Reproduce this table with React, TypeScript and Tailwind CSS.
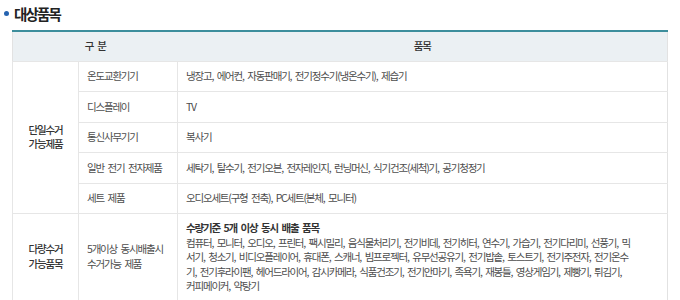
const single = [
  { name: "온도교환기기", items: "냉장고, 에어컨, 자동판매기, 전기정수기(냉온수기), 제습기" },
  { name: "디스플레이", items: "TV" },
  { name: "통신사무기기", items: "복사기" },
  { name: "일반 전기 전자제품", items: "세탁기, 탈수기, 전기오븐, 전자레인지, 런닝머신, 식기건조(세척)기, 공기청정기" },
  { name: "세트 제품", items: "오디오세트(구형 전축), PC세트(본체, 모니터)" },
];

const multiLines = [
  "컴퓨터, 모니터, 오디오, 프린터, 팩시밀리, 음식물처리기, 전기비데, 전기히터, 연수기, 가습기, 전기다리미, 선풍기, 믹",
  "서기, 청소기, 비디오플레이어, 휴대폰, 스캐너, 빔프로젝터, 유무선공유기, 전기밥솥, 토스트기, 전기주전자, 전기온수",
  "기, 전기후라이팬, 헤어드라이어, 감시카메라, 식품건조기, 전기안마기, 족욕기, 재봉틀, 영상게임기, 제빵기, 튀김기,",
  "커피메이커, 약탕기",
];

const cell = "border-b border-[#e6e6e6] px-2";

export default function App() {
  return (
    <div
      className="w-[680px] h-[300px] bg-white px-3 text-[10.5px] tracking-[-1.2px] [word-spacing:2.4px] text-[#4d4d4d]"
      style={{ fontFamily: '"Noto Sans CJK KR", "Noto Sans", sans-serif' }}
    >
      <div className="flex h-[30px] items-center -ml-2 gap-[5px] pb-[3px]">
        <span className="w-[5px] h-[5px] rounded-full bg-[#2563b0]" />
        <h2 className="text-[14.5px] font-semibold tracking-[-1.8px] text-[#222]">대상품목</h2>
      </div>

      <table className="w-full table-fixed border-collapse border-t-2 border-t-[#3d8e9c]">
        <colgroup>
          <col className="w-[66px]" />
          <col className="w-[99px]" />
          <col />
        </colgroup>
        <thead>
          <tr className="h-[30px] bg-[#ebf0f3] text-[#333]">
            <th colSpan={2} className="border-l border-[#e2e2e2] border-b border-b-[#e6e6e6] font-medium">
              구<span className="inline-block w-[4px]" />분
            </th>
            <th className="border-r border-[#e2e2e2] border-b border-b-[#e6e6e6] font-medium">품목</th>
          </tr>
        </thead>
        <tbody>
          {single.map((row, i) => (
            <tr key={row.name} className="h-[30.5px]">
              {i === 0 && (
                <td
                  rowSpan={5}
                  className="border-l border-r border-b border-[#e6e6e6] text-center leading-[14.5px] font-medium text-[#333]"
                >
                  <div>단일수거</div>
                  <div>가능제품</div>
                </td>
              )}
              <td className={`${cell} border-r`}>{row.name}</td>
              <td className={`${cell} border-r border-r-[#e2e2e2]`}>{row.items}</td>
            </tr>
          ))}
          <tr>
            <td className="border-l border-r border-b border-[#e6e6e6] text-center leading-[14.5px] font-medium text-[#333]">
              <div>다량수거</div>
              <div>가능품목</div>
            </td>
            <td className={`${cell} border-r leading-[14.5px]`}>
              <div>5개이상 동시배출시</div>
              <div>수거가능 제품</div>
            </td>
            <td className={`${cell} border-r border-r-[#e2e2e2] pt-[7px] pb-[6px] leading-[14.5px] whitespace-nowrap`}>
              <div className="font-semibold text-[#333]">수량기준 5개 이상 동시 배출 품목</div>
              {multiLines.map((l) => (
                <div key={l}>{l}</div>
              ))}
            </td>
          </tr>
        </tbody>
      </table>
    </div>
  );
}
